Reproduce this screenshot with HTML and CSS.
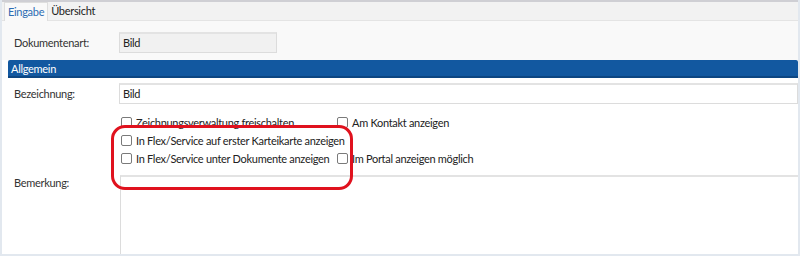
FILE: index.html
```html
<!DOCTYPE html>
<html lang="de">
<head>
<meta charset="utf-8">
<link rel="stylesheet" href="styles.css">
</head>
<body>
<div class="frame">
  <div class="tabs">
    <div class="tab active">Eingabe</div>
    <div class="tab">Übersicht</div>
  </div>
  <div class="head">
    <div class="row">
      <div class="label">Dokumentenart:</div>
      <div class="field ro">Bild</div>
    </div>
  </div>
  <div class="group">
    <div class="group-title">Allgemein</div>
    <div class="group-body">
      <div class="row">
        <div class="label">Bezeichnung:</div>
        <div class="field wide">Bild</div>
      </div>
      <div class="checks">
        <div class="check"><span class="box"></span>Zeichnungsverwaltung freischalten</div>
        <div class="check"><span class="box"></span>Am Kontakt anzeigen</div>
        <div class="check"><span class="box"></span>In Flex/Service auf erster Karteikarte anzeigen</div>
        <div class="check empty"></div>
        <div class="check"><span class="box"></span>In Flex/Service unter Dokumente anzeigen</div>
        <div class="check"><span class="box"></span>Im Portal anzeigen möglich</div>
      </div>
      <div class="row memo-row">
        <div class="label">Bemerkung:</div>
        <div class="memo"></div>
      </div>
      <div class="mark"></div>
    </div>
  </div>
</div>
</body>
</html>
```
FILE: styles.css
```css
* { box-sizing: border-box; }
html, body { margin: 0; padding: 0; }
body {
  width: 800px;
  height: 256px;
  overflow: hidden;
  background: #ffffff;
  font-family: Lato, "Open Sans", sans-serif;
  font-size: 11px;
  letter-spacing: -0.3px;
  color: #333333;
}
.frame {
  width: 800px;
  height: 256px;
  border-left: 2px solid #e2e8ef;
  border-right: 2px solid #e2e8ef;
  border-bottom: 2px solid #e2e8ef;
  overflow: hidden;
}
.tabs {
  height: 21px;
  display: flex;
  align-items: flex-end;
  background: #f2f2f2;
  border-top: 2px solid #cfcfd4;
  border-bottom: 1px solid #e4e4e4;
  padding-left: 2px;
}
.tab {
  height: 18px;
  line-height: 17px;
  padding: 0 3px;
  color: #222;
}
.tab.active {
  background: #f9f9f9;
  color: #2d6db3;
  border: 1px solid #dedede;
  border-bottom: none;
  margin-bottom: -1px;
  height: 19px;
}
.head {
  background: #f9f9f9;
  padding: 11px 0 7px 12px;
}
.row {
  display: flex;
  align-items: center;
}
.label {
  width: 105px;
  flex: none;
}
.field {
  height: 21px;
  padding-left: 3px;
  border: 1px solid #dcdcdc;
  border-top: 2px solid #e3e3e3;
  line-height: 18px;
  color: #222;
}
.field.ro {
  width: 158px;
  background: #f1f1f1;
}
.group {
  margin-left: 6px;
}
.group-title {
  height: 18px;
  line-height: 17px;
  background: #1258a0;
  color: #ffffff;
  padding-left: 3px;
  border-radius: 2px 2px 0 0;
  border-bottom: 2px solid #0d4682;
}
.group-body {
  position: relative;
  padding: 5px 0 0 6px;
}
.field.wide {
  flex: 1;
  background: #ffffff;
}
.checks {
  display: grid;
  grid-template-columns: 216px auto;
  grid-auto-rows: 18px;
  margin: 9px 0 0 107px;
}
.check {
  display: flex;
  align-items: center;
  white-space: nowrap;
  color: #222;
}
.box {
  width: 11px;
  height: 11px;
  border: 1px solid #7a7a7a;
  border-radius: 2px;
  background: #fff;
  margin-right: 4px;
  flex: none;
}
.memo-row {
  align-items: flex-start;
  margin-top: 8px;
}
.memo-row .label {
  padding-top: 1px;
  width: 106px;
}
.memo {
  flex: 1;
  height: 80px;
  border-left: 1px solid #dcdcdc;
  border-top: 2px solid #e3e3e3;
}
.mark {
  position: absolute;
  left: 103px;
  top: 47px;
  width: 242px;
  height: 65px;
  border: 3.5px solid #e0121e;
  border-radius: 14px;
}
```
